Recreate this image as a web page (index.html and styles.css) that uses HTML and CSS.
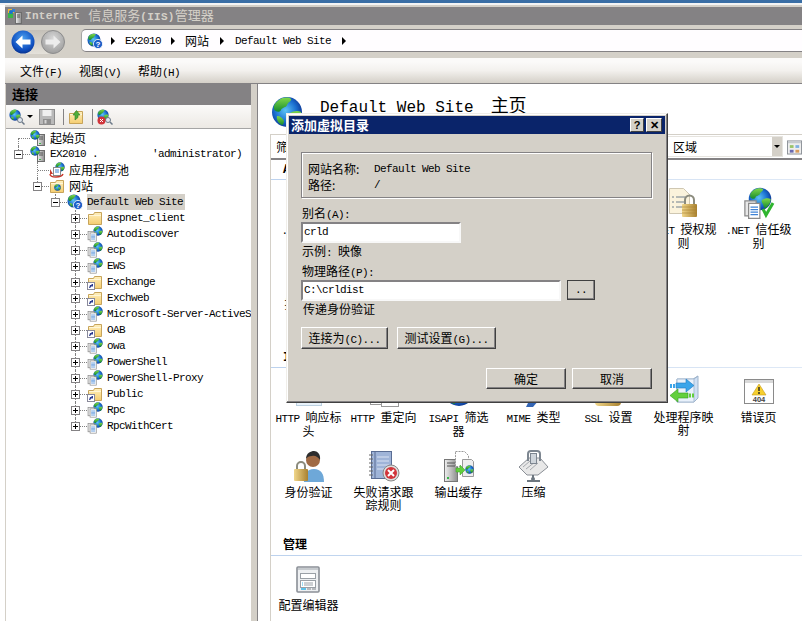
FILE: index.html
```html
<!DOCTYPE html>
<html lang="zh-CN">
<head>
<meta charset="UTF-8">
<title>Internet 信息服务(IIS)管理器</title>
<link rel="stylesheet" href="styles.css">
</head>
<body>
<svg class="defs" xmlns="http://www.w3.org/2000/svg">
	<defs>
		<radialGradient id="gBlue" cx="45%" cy="45%" r="60%"><stop offset="0" stop-color="#5cc4f5"/><stop offset=".6" stop-color="#1a6fd0"/><stop offset="1" stop-color="#0b2f8c"/></radialGradient>
		<linearGradient id="gGreen" x1="0" y1="0" x2="0" y2="1"><stop offset="0" stop-color="#7fd84a"/><stop offset="1" stop-color="#158a2c"/></linearGradient>
		<linearGradient id="gFolder" x1="0" y1="0" x2="0" y2="1"><stop offset="0" stop-color="#fff0bd"/><stop offset="1" stop-color="#f5cd70"/></linearGradient>
		<linearGradient id="gGold" x1="0" y1="0" x2="1" y2="0"><stop offset="0" stop-color="#f0d68a"/><stop offset="1" stop-color="#a9812f"/></linearGradient>
		<linearGradient id="gTower" x1="0" y1="0" x2="1" y2="0"><stop offset="0" stop-color="#f0f0f0"/><stop offset="1" stop-color="#8d8d8d"/></linearGradient>
		<radialGradient id="gBack" cx="50%" cy="35%" r="70%"><stop offset="0" stop-color="#4aa0f0"/><stop offset=".7" stop-color="#0f4fc0"/><stop offset="1" stop-color="#062a80"/></radialGradient>
		<radialGradient id="gGrey" cx="50%" cy="35%" r="70%"><stop offset="0" stop-color="#d8d8d8"/><stop offset="1" stop-color="#9a9a9a"/></radialGradient>

		<symbol id="globe" viewBox="0 0 32 32">
			<circle cx="16" cy="16" r="15" fill="url(#gBlue)"/>
			<path fill="url(#gGreen)" d="M8 4c4-3 10-3 12-1 1 2-3 3-4 6-1 3-5 2-6 5-1 3-6 2-7-1C2 9 5 6 8 4z"/>
			<path fill="url(#gGreen)" d="M19 17c3-2 8-3 11-1 1 3-2 9-6 12-2 1-3-2-4-5-1-2-3-4-1-6z"/>
			<path fill="url(#gGreen)" d="M6 20c3 0 6 2 7 5 0 2-1 4-2 4-3-1-6-5-5-9z"/>
		</symbol>
		<symbol id="page" viewBox="0 0 16 16">
			<rect x="1.5" y="1.5" width="9" height="12" fill="#e8e8e8" stroke="#8a8a8a"/>
			<rect x="4.5" y="3.5" width="9" height="12" fill="#fff" stroke="#8a8a8a"/>
			<path d="M6 6.5h6M6 8.5h6M6 10.5h6M6 12.5h6" stroke="#3f83d6"/>
		</symbol>
		<symbol id="folder" viewBox="0 0 16 16">
			<path d="M1.5 4.5v10h13v-12h-7l-1 2z" fill="url(#gFolder)" stroke="#c7a45a"/>
			<path d="M2 5.5h12" stroke="#fff6d8"/>
		</symbol>
		<symbol id="app" viewBox="0 0 16 16">
			<use href="#globe" x="6" y="0" width="10" height="10"/>
			<use href="#page" x="0" y="4" width="11" height="12"/>
		</symbol>
		<symbol id="shortcut" viewBox="0 0 16 16">
			<use href="#folder"/>
			<rect x=".5" y="8.5" width="7" height="7" fill="#fff" stroke="#8a8a9a"/>
			<path d="M2 14l1-3h2l-1-1 2 0v3l-1-1-2 2z" fill="#2a3a90"/>
		</symbol>
		<symbol id="site" viewBox="0 0 16 16">
			<use href="#globe" width="14" height="14" x="0" y="0"/>
			<circle cx="11" cy="11" r="4.6" fill="#1f5fc8" stroke="#fff" stroke-width=".8"/>
			<text x="11" y="14" text-anchor="middle" font-family="Liberation Sans" font-size="8" font-weight="bold" fill="#fff">?</text>
		</symbol>
		<symbol id="server" viewBox="0 0 16 16">
			<rect x="7.5" y="4.5" width="7" height="11" fill="url(#gTower)" stroke="#6d6d6d"/>
			<path d="M9 7h4M9 9h4" stroke="#555"/>
			<use href="#globe" x="0" y="0" width="10" height="10"/>
			<rect x="9" y="13" width="2" height="1" fill="#3ab54a"/>
		</symbol>
		<symbol id="iis" viewBox="0 0 16 16">
			<rect x="8.5" y="4.5" width="6" height="11" fill="url(#gTower)" stroke="#6d6d6d"/>
			<path d="M10 7h3M10 9h3" stroke="#555"/>
			<path d="M1 1h6v4H1z" fill="#f2b632"/>
			<path d="M1 5h5v5H1z" fill="#3ab54a"/>
			<path d="M5 1h3v3H5z" fill="#2f7fd8"/>
			<circle cx="4" cy="4" r="2" fill="#1a6fd0"/>
		</symbol>
		<symbol id="pool" viewBox="0 0 16 16">
			<use href="#globe" x="6" y="0" width="10" height="10"/>
			<rect x="4.5" y="5.5" width="7" height="8" fill="#fff" stroke="#8a8a8a"/>
			<path d="M6 8h4M6 10h4" stroke="#3f83d6"/>
			<path d="M1 12c0 3 3 3 6 3s6 0 7-3" fill="none" stroke="#c8382c" stroke-width="1.4"/>
			<path d="M1 7v5h3z" fill="#c8382c"/>
		</symbol>
		<symbol id="webfolder" viewBox="0 0 16 16">
			<use href="#folder"/>
			<use href="#globe" x="5" y="6" width="7" height="7"/>
		</symbol>
		<symbol id="connect" viewBox="0 0 16 16">
			<use href="#globe" width="12" height="12"/>
			<circle cx="11" cy="11" r="2.5" fill="#dfe6ee" stroke="#6d7a88"/>
			<path d="M13 13l2.5 2.5" stroke="#6d7a88" stroke-width="1.5"/>
		</symbol>
		<symbol id="save" viewBox="0 0 16 16">
			<rect x=".5" y=".5" width="15" height="15" fill="#b9b9b9" stroke="#8d8d8d"/>
			<rect x="3.5" y="1" width="9" height="6" fill="#efefef"/>
			<rect x="4" y="10" width="8" height="5.5" fill="#8f8f8f"/>
			<rect x="5.5" y="11" width="2" height="3.5" fill="#d6d6d6"/>
		</symbol>
		<symbol id="upfolder" viewBox="0 0 16 16">
			<use href="#folder"/>
			<path d="M7 11V6H5l3.5-4.5L12 6h-2v2.5z" fill="#4fae3a" stroke="#2d7d23" stroke-width=".6"/>
		</symbol>
		<symbol id="disconnect" viewBox="0 0 16 16">
			<use href="#connect"/>
			<circle cx="4.5" cy="11.5" r="4" fill="#d1343a"/>
			<path d="M3 10l3 3M6 10l-3 3" stroke="#fff"/>
		</symbol>
		<symbol id="lockdoc" viewBox="0 0 32 32">
			<path d="M1.5 1.5h14l6 6v19h-20z" fill="#fbf3dc" stroke="#cfc7b2"/>
			<path d="M4 10h2M8 10h9M4 15h2M8 15h9M4 20h2M8 20h9" stroke="#71808f"/>
			<rect x="14" y="17" width="15" height="13" rx="1" fill="url(#gGold)"/>
			<path d="M14 20h15M14 23h15M14 26h15" stroke="#a9812f" stroke-width=".6"/>
			<path d="M17 17v-4a4.500 4.500 0 0 1 9 0v4" fill="none" stroke="#8b8b7d" stroke-width="2"/>
		</symbol>
		<symbol id="netcheck" viewBox="0 0 32 32">
			<use href="#globe" x="5" y="0" width="24" height="24"/>
			<use href="#page" x="0" y="12" width="20" height="20"/>
			<path d="M20 22l3 6 7-12" fill="none" stroke="#2fb52f" stroke-width="3"/>
		</symbol>
		<symbol id="headers" viewBox="0 0 32 32">
			<rect x="3.5" y="2.5" width="25" height="28" fill="#e9f3fb" stroke="#bcd0e0"/>
			<path d="M7 8h18M7 13h18" stroke="#6fa6d6"/>
		</symbol>
		<symbol id="redirect" viewBox="0 0 32 32">
			<rect x="2.500" y="5.500" width="17" height="24" fill="#fff" stroke="#999"/>
			<rect x="13.500" y="9.500" width="17" height="22" fill="#fff" stroke="#999"/>
			<path d="M20 27h6" stroke="#3ab54a" stroke-width="2"/>
		</symbol>
		<symbol id="mime" viewBox="0 0 32 32">
			<path d="M8 32l5-10 8 3-6 7z" fill="#3264b4"/>
			<rect x="8" y="3" width="16" height="20" fill="#e8eef8" stroke="#99a"/>
		</symbol>
		<symbol id="lock" viewBox="0 0 32 32">
			<rect x="2" y="18" width="26" height="13" rx="4" fill="url(#gGold)"/>
			<path d="M8 18v-6a7 7 0 0 1 14 0v6" fill="none" stroke="#8b8b7d" stroke-width="3"/>
		</symbol>
		<symbol id="mapping" viewBox="0 0 32 32">
			<path d="M9 4h16l5-3v22l-4 4H9z" fill="#cfe0f4" stroke="#9fb4cc"/>
			<path d="M9 4h17v23H9z" fill="#e9f1fb" stroke="#a9bcd2"/>
			<path d="M26 4l4-3" stroke="#9fb4cc"/>
			<path d="M8 8h10V4l8 6.500-8 6.500v-4H8z" fill="#3ba5ea" stroke="#1f78c0" stroke-width=".6"/>
			<path d="M2 9h2v4H2zM5 9h2v4H5z" fill="#3ba5ea"/>
			<path d="M20 18H10v-4l-8 6.500 8 6.500v-4h10z" fill="#63cf3d" stroke="#38a022" stroke-width=".6"/>
			<path d="M21 18.500h2v4h-2zM24 18.500h2v4h-2z" fill="#63cf3d"/>
		</symbol>
		<symbol id="err404" viewBox="0 0 32 32">
			<rect x="1.500" y="4.500" width="29" height="24" fill="#fff" stroke="#8a8a8a"/>
			<path d="M2 5h28v3H2z" fill="#d9d9d9"/>
			<path d="M16 9l7 11H9z" fill="#f6cf2f" stroke="#c79a1a" stroke-width=".6"/>
			<path d="M16 12v4M16 17v2" stroke="#222" stroke-width="1.4"/>
			<text x="16" y="27" text-anchor="middle" font-family="Liberation Sans" font-size="7.500" font-weight="bold" fill="#444">404</text>
		</symbol>
		<symbol id="auth" viewBox="0 0 32 32">
			<path d="M11 32c-1-8 3-13 10-13s10 5 10 13z" fill="#6ea8d8"/>
			<circle cx="20" cy="10" r="7" fill="#a06a44"/>
			<path d="M13 9c0-6 5-8 8-8s7 3 6 9c-2-3-5-5-8-4-3 0-5 1-6 3z" fill="#2d2d2d"/>
			<rect x="1" y="19" width="14" height="12" rx="1" fill="url(#gGold)"/>
			<path d="M4 19v-3a4 4 0 0 1 8 0v3" fill="none" stroke="#8b8b7d" stroke-width="2"/>
		</symbol>
		<symbol id="failreq" viewBox="0 0 32 32">
			<rect x="3.500" y="1.500" width="20" height="27" fill="#9fb4d8" stroke="#5a6d94"/>
			<path d="M7 1.500v27" stroke="#5a6d94"/>
			<path d="M9 7h12M9 11h12M9 15h12M9 19h12" stroke="#d9e2f2"/>
			<path d="M1 5h4M1 9h4M1 13h4M1 17h4M1 21h4M1 25h4" stroke="#666"/>
			<circle cx="23" cy="23" r="8" fill="#ddd" stroke="#888"/>
			<circle cx="23" cy="23" r="6" fill="#d1343a"/>
			<path d="M20 20l6 6M26 20l-6 6" stroke="#fff" stroke-width="2"/>
		</symbol>
		<symbol id="cache" viewBox="0 0 32 32">
			<rect x="1.500" y="9.500" width="13" height="22" fill="url(#gTower)" stroke="#777"/>
			<path d="M4 13h8M4 16h8" stroke="#555"/>
			<rect x="4" y="27" width="2" height="2" fill="#3ab54a"/>
			<path d="M12.500 1.500h9l4 4v11h-13z" fill="#fff" stroke="#999" stroke-dasharray="2 1"/>
			<path d="M19.500 9.500h9l2 2v15h-11z" fill="#eee" stroke="#999"/>
			<use href="#globe" x="22" y="15" width="9" height="9"/>
			<path d="M13 18h4v-3l5 5-5 5v-3h-4z" fill="#63cf3d" stroke="#38a022" stroke-width=".5"/>
		</symbol>
		<symbol id="compress" viewBox="0 0 32 32">
			<path d="M1 17l10-9h11l8 9-10 8H9z" fill="#e8e8e8" stroke="#8a8f96"/>
			<path d="M5 17l7-6M8 19l9-7M12 20l8-7" stroke="#a5a8ad"/>
			<path d="M10 11V4a3 3 0 0 1 3-3h6a3 3 0 0 1 3 3v7" fill="none" stroke="#7d8690" stroke-width="2"/>
			<rect x="12.500" y="3.500" width="6" height="10" fill="#cfd5db" stroke="#7d8690"/>
			<path d="M15 25v4M9 31h13" stroke="#6d7780" stroke-width="2"/>
			<circle cx="15" cy="29" r="2" fill="#6d7780"/>
		</symbol>
		<symbol id="config" viewBox="0 0 32 32">
			<rect x="4" y="4" width="22" height="25" rx="1" fill="#eef0f2" stroke="#8a8f96" stroke-width="1.600"/>
			<path d="M5 5h20v2H5z" fill="#c6cace"/>
			<rect x="7.500" y="10.500" width="15" height="5" fill="#fff" stroke="#9aa0a6"/>
			<rect x="7.500" y="17.500" width="15" height="7" fill="#fff" stroke="#9aa0a6"/>
			<path d="M8 26h5" stroke="#39b7e8" stroke-width="1.600"/>
			<path d="M14 26h4M19 26h4" stroke="#a5a8ad" stroke-width="1.600"/>
			<path d="M9 20h1M9 22h1" stroke="#39b7e8"/>
			<path d="M11 20h9M11 22h9" stroke="#9aa0a6"/>
		</symbol>
		<symbol id="views" viewBox="0 0 16 16">
			<rect x=".5" y="1.500" width="15" height="14" fill="#eee" stroke="#8a8f96"/>
			<path d="M1 2h14v2H1z" fill="#c6cace"/>
			<path d="M3 6h4v3H3z" fill="#9ac46a"/>
			<path d="M9 6h4v3H9z" fill="#7fb0e0"/>
			<path d="M3 11h4v3H3z" fill="#6a6ab0"/>
			<path d="M9 11h4v3H9z" fill="#d89a5a"/>
		</symbol>
	</defs>
</svg>

<div class="topStrip"></div>
<div class="window">
	<div class="titleBar">
		<svg class="ico"><use href="#iis"/></svg>
		<span class="titleLatin">Internet</span>
		<span class="titleText">信息服务<span class="titleLatin">(IIS)</span>管理器</span>
	</div>

	<div class="navBar">
		<div class="navButtons">
			<svg class="navBtn" viewBox="0 0 24 24"><circle cx="12" cy="12" r="11.500" fill="url(#gBack)"/><path d="M4.500 12l7-6.500v4h8v5h-8v4z" fill="#fff"/></svg>
			<svg class="navBtn" viewBox="0 0 24 24"><circle cx="12" cy="12" r="11.500" fill="url(#gGrey)" stroke="#8d8d8d"/><path d="M19.500 12l-7-6.500v4h-8v5h8v4z" fill="#ececec"/></svg>
		</div>
		<div class="address">
			<svg class="ico"><use href="#site"/></svg>
			<span class="crumbArrow"></span>
			<span class="m">EX2010</span>
			<span class="crumbArrow"></span>
			<span>网站</span>
			<span class="crumbArrow wide"></span>
			<span class="m">Default Web Site</span>
			<span class="crumbArrow wide"></span>
		</div>
	</div>

	<div class="menuBar">
		<span>文件<span class="m">(F)</span></span>
		<span>视图<span class="m">(V)</span></span>
		<span>帮助<span class="m">(H)</span></span>
	</div>

	<div class="panes">
		<div class="leftPane">
			<div class="paneHeader">连接</div>
			<div class="paneTools">
				<svg class="ico"><use href="#connect"/></svg>
				<span class="caret"></span>
				<svg class="ico"><use href="#save"/></svg>
				<span class="toolSep"></span>
				<svg class="ico"><use href="#upfolder"/></svg>
				<span class="toolSep"></span>
				<svg class="ico"><use href="#disconnect"/></svg>
			</div>
			<div class="tree">
				<div class="row l0"><span class="twist first"></span><svg class="ico"><use href="#server"/></svg><span>起始页</span></div>
				<div class="row l0"><span class="twist upper"><span class="box minus"></span></span><svg class="ico"><use href="#server"/></svg><span class="m pre">EX2010 .         'administrator)</span></div>
				<div class="row l1"><span class="twist"></span><svg class="ico"><use href="#pool"/></svg><span>应用程序池</span></div>
				<div class="row l1"><span class="twist upper"><span class="box minus"></span></span><svg class="ico"><use href="#webfolder"/></svg><span>网站</span></div>
				<div class="row l2"><span class="twist upper"><span class="box minus"></span></span><svg class="ico"><use href="#site"/></svg><span class="m selected">Default Web Site</span></div>
				<div class="row l3"><span class="twist"><span class="box plus"></span></span><svg class="ico"><use href="#folder"/></svg><span class="m">aspnet_client</span></div>
				<div class="row l3"><span class="twist"><span class="box plus"></span></span><svg class="ico"><use href="#app"/></svg><span class="m">Autodiscover</span></div>
				<div class="row l3"><span class="twist"><span class="box plus"></span></span><svg class="ico"><use href="#app"/></svg><span class="m">ecp</span></div>
				<div class="row l3"><span class="twist"><span class="box plus"></span></span><svg class="ico"><use href="#app"/></svg><span class="m">EWS</span></div>
				<div class="row l3"><span class="twist"><span class="box plus"></span></span><svg class="ico"><use href="#shortcut"/></svg><span class="m">Exchange</span></div>
				<div class="row l3"><span class="twist"><span class="box plus"></span></span><svg class="ico"><use href="#shortcut"/></svg><span class="m">Exchweb</span></div>
				<div class="row l3"><span class="twist"><span class="box plus"></span></span><svg class="ico"><use href="#app"/></svg><span class="m">Microsoft-Server-ActiveSync</span></div>
				<div class="row l3"><span class="twist"><span class="box plus"></span></span><svg class="ico"><use href="#shortcut"/></svg><span class="m">OAB</span></div>
				<div class="row l3"><span class="twist"><span class="box plus"></span></span><svg class="ico"><use href="#app"/></svg><span class="m">owa</span></div>
				<div class="row l3"><span class="twist"><span class="box plus"></span></span><svg class="ico"><use href="#app"/></svg><span class="m">PowerShell</span></div>
				<div class="row l3"><span class="twist"><span class="box plus"></span></span><svg class="ico"><use href="#app"/></svg><span class="m">PowerShell-Proxy</span></div>
				<div class="row l3"><span class="twist"><span class="box plus"></span></span><svg class="ico"><use href="#shortcut"/></svg><span class="m">Public</span></div>
				<div class="row l3"><span class="twist"><span class="box plus"></span></span><svg class="ico"><use href="#app"/></svg><span class="m">Rpc</span></div>
				<div class="row l3"><span class="twist upper"><span class="box plus"></span></span><svg class="ico"><use href="#app"/></svg><span class="m">RpcWithCert</span></div>
			</div>
		</div>

		<div class="rightPane">
			<div class="pageHead">
				<svg class="ico32"><use href="#globe"/></svg>
				<h1 class="pageTitle"><span class="titleMono">Default Web Site</span>主页</h1>
			</div>
			<div class="content">
				<div class="filterBar">
					<span>筛选:</span>
					<div class="combo"><span>区域</span><span class="comboBtn"><span class="caret"></span></span></div>
					<svg class="ico viewIco"><use href="#views"/></svg>
				</div>

				<h2 class="groupHead first"><span class="m groupName">ASP.NET</span></h2>
				<div class="features">
					<div class="feature"><span class="iconSlot"></span><span class="label"><span class="m">.NET </span>编译</span></div>
					<div class="feature"></div>
					<div class="feature"></div>
					<div class="feature"></div>
					<div class="feature"></div>
					<div class="feature"><svg class="ico32"><use href="#lockdoc"/></svg><span class="label"><span class="m">.NET </span>授权规则</span></div>
					<div class="feature"><svg class="ico32"><use href="#netcheck"/></svg><span class="label"><span class="m">.NET </span>信任级别</span></div>
					<div class="feature"><span class="iconSlot"></span><span class="label">提供程序</span></div>
				</div>

				<h2 class="groupHead"><span class="m groupName">IIS</span></h2>
				<div class="features">
					<div class="feature"><svg class="ico32"><use href="#headers"/></svg><span class="label"><span class="m">HTTP </span>响应标头</span></div>
					<div class="feature"><svg class="ico32"><use href="#redirect"/></svg><span class="label"><span class="m">HTTP </span>重定向</span></div>
					<div class="feature"><svg class="ico32"><use href="#globe"/></svg><span class="label"><span class="m">ISAPI </span>筛选器</span></div>
					<div class="feature"><svg class="ico32"><use href="#mime"/></svg><span class="label"><span class="m">MIME </span>类型</span></div>
					<div class="feature"><svg class="ico32"><use href="#lock"/></svg><span class="label"><span class="m">SSL </span>设置</span></div>
					<div class="feature"><svg class="ico32"><use href="#mapping"/></svg><span class="label">处理程序映射</span></div>
					<div class="feature"><svg class="ico32"><use href="#err404"/></svg><span class="label">错误页</span></div>
					<div class="feature"><svg class="ico32"><use href="#auth"/></svg><span class="label">身份验证</span></div>
					<div class="feature"><svg class="ico32"><use href="#failreq"/></svg><span class="label">失败请求跟踪规则</span></div>
					<div class="feature"><svg class="ico32"><use href="#cache"/></svg><span class="label">输出缓存</span></div>
					<div class="feature"><svg class="ico32"><use href="#compress"/></svg><span class="label">压缩</span></div>
				</div>

				<h2 class="groupHead">管理</h2>
				<div class="features">
					<div class="feature"><svg class="ico32"><use href="#config"/></svg><span class="label">配置编辑器</span></div>
				</div>
			</div>
		</div>
	</div>
</div>

<div class="dialog">
	<div class="dlgTitle">
		<span>添加虚拟目录</span>
		<span class="capBtn helpBtn">?</span>
		<span class="capBtn closeBtn">✕</span>
	</div>
	<div class="dlgBody">
		<div class="infoBox">
			<div class="infoRow"><span class="infoKey">网站名称:</span><span class="m">Default Web Site</span></div>
			<div class="infoRow"><span class="infoKey">路径:</span><span class="m">/</span></div>
		</div>
		<div class="fieldLabel aliasLabel">别名<span class="m">(A):</span></div>
		<div class="input aliasInput m">crld</div>
		<div class="hint">示例<span class="m">: </span>映像</div>
		<div class="fieldLabel pathLabel">物理路径<span class="m">(P):</span></div>
		<div class="pathRow">
			<div class="input pathInput m">C:\crldist</div>
			<div class="btn browseBtn m">..</div>
		</div>
		<div class="hint passLabel">传递身份验证</div>
		<div class="btnRow">
			<div class="btn connectBtn">连接为<span class="m">(C)...</span></div>
			<div class="btn testBtn">测试设置<span class="m">(G)...</span></div>
		</div>
		<div class="okRow">
			<div class="btn okBtn">确定</div>
			<div class="btn okBtn">取消</div>
		</div>
	</div>
</div>
</body>
</html>
```

FILE: styles.css
```css
html, body {
	margin: 0;
	height: 621px;
	overflow: hidden;
}
body {
	background: #fff;
	font-family: "Noto Sans CJK SC", "Liberation Sans", sans-serif;
	font-size: 12px;
	line-height: 14px;
	color: #000;
	position: relative;
}
.defs {
	display: block;
	width: 0;
	height: 0;
}
.m {
	font-family: "Liberation Mono", monospace;
	font-size: 11px;
	letter-spacing: -.6px;
	line-height: 10px;
}
.pre {
	white-space: pre;
}
.ico {
	display: block;
	flex: none;
	width: 16px;
	height: 16px;
}
.ico32, .iconSlot {
	display: block;
	flex: none;
	width: 32px;
	height: 32px;
}

.topStrip {
	height: 3px;
	background: #3a6ea5;
	border-bottom: 2px solid #f4f4f4;
}
.window {
	margin-left: 5px;
	height: 616px;
	padding-top: 2px;
	box-sizing: border-box;
	background: #d4d0c8;
	display: flex;
	flex-direction: column;
}

.titleBar {
	height: 18px;
	flex: none;
	background: #848284;
	color: #d4d0c8;
	display: flex;
	align-items: center;
	padding-left: 2px;
	font-size: 13px;
}
.titleBar .ico {
	margin-right: 2px;
}
.titleLatin {
	font-family: "Liberation Mono", monospace;
	font-size: 11px;
	font-weight: bold;
	letter-spacing: .3px;
}
.titleText {
	margin-left: 8px;
}

.navBar {
	height: 33px;
	flex: none;
	display: flex;
	align-items: flex-start;
	padding-top: 4px;
	box-sizing: border-box;
}
.navButtons {
	width: 54px;
	margin: 1px 16px 0 6px;
	height: 24px;
	display: flex;
	justify-content: space-between;
	flex: none;
	background: linear-gradient(#c4c0b8, #e4e1da);
	border-radius: 12px;
}
.navBtn {
	display: block;
	width: 24px;
	height: 24px;
}
.address {
	flex: 1;
	height: 21px;
	background: #fffdff;
	border: solid #848284;
	border-width: 1px 0;
	border-left: 1px solid #a5a5a5;
	border-radius: 5px 0 0 5px;
	display: flex;
	align-items: center;
	padding-left: 5px;
}
.crumbArrow {
	width: 0;
	height: 0;
	border: solid transparent;
	border-width: 4px 0 4px 4px;
	border-left-color: #000;
	margin: 0 10px;
}
.crumbArrow.wide {
	margin: 0 11px;
}
.address .ico + .crumbArrow {
	margin-left: 8px;
}

.menuBar {
	height: 25px;
	flex: none;
	background: linear-gradient(#fbfaf9 15%, #f3f1ee 50%, #d4d0c8);
	border-bottom: 1px solid #848284;
	display: flex;
	align-items: center;
	gap: 17px;
	padding-left: 15px;
}

.panes {
	flex: 1;
	min-height: 0;
	display: flex;
	padding-left: 1px;
}
.leftPane {
	width: 245px;
	flex: none;
	display: flex;
	flex-direction: column;
	overflow: hidden;
}
.paneHeader {
	height: 21px;
	flex: none;
	background: #848284;
	font-size: 13px;
	font-weight: bold;
	line-height: 20px;
	padding-left: 6px;
}
.paneTools {
	height: 24px;
	flex: none;
	background: linear-gradient(#fbfaf9, #ece9e4);
	border-bottom: 1px solid #a5a5a5;
	box-sizing: border-box;
	display: flex;
	align-items: center;
	padding-left: 3px;
}
.caret {
	display: block;
	width: 0;
	height: 0;
	border: solid transparent;
	border-width: 3px 3px 0;
	border-top-color: #000;
}
.paneTools .caret {
	margin: 0 6px 0 2px;
}
.toolSep {
	width: 1px;
	height: 16px;
	background: #848284;
	margin: 0 4px 0 8px;
}

.tree {
	flex: 1;
	background: #fff;
	padding-top: 1px;
}
.row {
	height: 16px;
	display: flex;
	align-items: center;
	white-space: nowrap;
}
.row .ico + span {
	margin-left: 4px;
}
.l0 { padding-left: 8px; }
.l1 { padding-left: 27px; }
.l2 { padding-left: 45px; }
.l3 { padding-left: 65px; }
.twist {
	flex: none;
	display: block;
	position: relative;
	width: 16px;
	height: 16px;
}
.twist::before {
	content: "";
	position: absolute;
	left: 4px;
	top: 0;
	bottom: 0;
	border-left: 1px dotted #808080;
}
.twist::after {
	content: "";
	position: absolute;
	left: 5px;
	right: 0;
	top: 8px;
	border-top: 1px dotted #808080;
}
.twist.first::before {
	top: 8px;
}
.twist.upper::before {
	bottom: 8px;
}
.box {
	position: absolute;
	z-index: 1;
	left: 0;
	top: 4px;
	width: 9px;
	height: 9px;
	box-sizing: border-box;
	border: 1px solid #848284;
	background:
		linear-gradient(#000, #000) center / 5px 1px no-repeat,
		#fff;
}
.box.plus {
	background:
		linear-gradient(#000, #000) center / 5px 1px no-repeat,
		linear-gradient(#000, #000) center / 1px 5px no-repeat,
		#fff;
}
.row .selected {
	margin-left: 4px;
	background: #d4d0c8;
	line-height: 16px;
	padding: 0 2px 0 0;
}

.rightPane {
	flex: 1;
	min-width: 0;
	margin-left: 6px;
	background: #fff;
	border-left: 1px solid #848284;
	display: flex;
	flex-direction: column;
}
.pageHead {
	height: 50px;
	flex: none;
	box-sizing: border-box;
	padding: 12px 0 0 13px;
	display: flex;
}
.pageTitle {
	margin: -2px 0 0 17px;
	font-weight: normal;
	font-size: 18px;
	line-height: 20px;
}
.titleMono {
	font-family: "Liberation Mono", monospace;
	font-size: 16px;
	margin-right: 17px;
}
.content {
	flex: 1;
	margin-left: 12px;
	border-left: 1px solid #d4d0c8;
	overflow: hidden;
}
.filterBar {
	height: 26px;
	box-sizing: border-box;
	border-top: 1px solid #d4d0c8;
	border-bottom: 2px solid #848284;
	display: flex;
	align-items: center;
	padding-left: 5px;
}
.combo {
	margin-left: auto;
	width: 120px;
	height: 21px;
	box-sizing: border-box;
	border: 1px solid #e6e4df;
	display: flex;
	align-items: center;
	justify-content: space-between;
	padding-left: 9px;
}
.comboBtn {
	width: 10px;
	height: 19px;
	background: #d4d0c8;
	display: flex;
	align-items: center;
	justify-content: center;
}
.viewIco {
	width: 15px;
	margin-left: 4px;
}
.groupHead {
	margin: 0;
	height: 31px;
	box-sizing: border-box;
	padding: 12px 0 0 12px;
	font-size: 12px;
	line-height: 14px;
	font-weight: bold;
	border-bottom: 1px solid;
	border-image: linear-gradient(90deg, #bcd2ee, #dfe9f6) 1;
}
.groupHead.first {
	height: 20px;
	padding-top: 1px;
}
.groupName {
	font-size: 12px;
	letter-spacing: 0;
}
.features {
	display: grid;
	grid-template-columns: repeat(7, 75px);
	grid-auto-rows: 75px;
	padding-top: 7px;
}
.feature {
	display: flex;
	flex-direction: column;
	align-items: center;
	gap: 3px;
	text-align: center;
}
.label {
	display: block;
	width: 70px;
	line-height: 13px;
}

.dialog {
	position: absolute;
	left: 286px;
	top: 113px;
	width: 382px;
	height: 290px;
	box-sizing: border-box;
	background: #d4d0c8;
	border: 1px solid;
	border-color: #f0eee9 #404040 #404040 #f0eee9;
	box-shadow: inset -1px -1px 0 #848284, inset 1px 1px 0 #fff;
	padding: 2px;
}
.dlgTitle {
	height: 18px;
	background: #0a246a;
	color: #fff;
	font-size: 13px;
	font-weight: bold;
	line-height: 18px;
	padding-left: 2px;
	display: flex;
	align-items: center;
}
.capBtn {
	width: 14px;
	height: 14px;
	box-sizing: border-box;
	background: #d4d0c8;
	color: #000;
	border: 1px solid;
	border-color: #fff #404040 #404040 #fff;
	font-family: "Liberation Sans", sans-serif;
	font-size: 11px;
	line-height: 12px;
	text-align: center;
}
.helpBtn {
	margin-left: auto;
}
.closeBtn {
	width: 16px;
	margin: 0 3px 0 2px;
}
.dlgBody {
	padding-left: 12px;
}
.infoBox {
	margin: 18px 13px 0 0;
	height: 46px;
	box-sizing: border-box;
	border: 1px solid #848284;
	box-shadow: 1px 1px 0 #fff, inset 1px 1px 0 #fff;
	padding: 8px 0 0 6px;
}
.infoRow {
	display: flex;
	height: 16px;
	align-items: center;
}
.infoKey {
	width: 66px;
}
.fieldLabel {
	height: 14px;
	margin: 8px 0 0 1px;
}
.input {
	box-sizing: border-box;
	background: #fff;
	border: 2px solid;
	border-color: #848284 #f8f8f8 #f8f8f8 #848284;
	height: 21px;
	line-height: 17px;
	padding-left: 1px;
}
.aliasInput {
	margin-top: 2px;
	width: 160px;
}
.hint {
	height: 14px;
	margin: 1px 0 0 1px;
}
.pathLabel {
	margin-top: 6px;
}
.pathRow {
	display: flex;
	margin-top: 2px;
	gap: 6px;
}
.pathInput {
	width: 260px;
}
.btn {
	box-sizing: border-box;
	border: 1px solid;
	border-color: #fff #404040 #404040 #fff;
	box-shadow: inset -1px -1px 0 #848284;
	text-align: center;
	background: #d4d0c8;
}
.browseBtn {
	width: 28px;
	height: 20px;
	line-height: 18px;
	border-color: #404040;
}
.passLabel {
	margin: 1px 0 0 2px;
}
.btnRow {
	display: flex;
	gap: 9px;
	margin-top: 11px;
}
.connectBtn {
	width: 87px;
	height: 22px;
	line-height: 20px;
}
.testBtn {
	width: 99px;
	height: 22px;
	line-height: 20px;
}
.okRow {
	display: flex;
	justify-content: flex-end;
	gap: 6px;
	margin: 19px 13px 0 0;
}
.okBtn {
	width: 80px;
	height: 21px;
	line-height: 19px;
}
```
